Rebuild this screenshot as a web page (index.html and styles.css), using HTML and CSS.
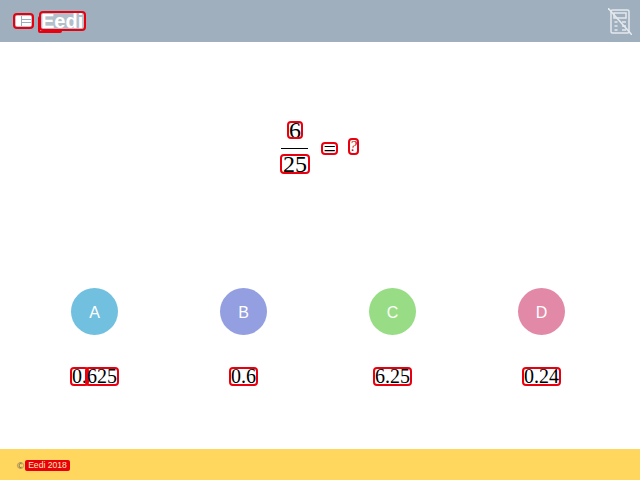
FILE: index.html
```html
<!DOCTYPE html>
<html lang="en">
<head>
  <meta charset="UTF-8">
  <title>Eedi</title>
  <link rel="stylesheet" href="styles.css">
</head>
<body>
  <header class="topbar">
    <div class="brand">
      <span class="mark logo-mark">
        <svg width="15" height="10" viewBox="0 0 15 10">
          <rect x="0" y="0" width="15" height="10" fill="#fff"/>
          <rect x="5" y="0" width="1" height="10" fill="#a0afbd"/>
          <rect x="6" y="3" width="9" height="1" fill="#a0afbd"/>
          <rect x="6" y="6" width="9" height="1" fill="#a0afbd"/>
        </svg>
      </span>
      <span class="mark logo-name">Eedi</span>
    </div>
    <svg class="calc" width="24" height="27" viewBox="0 0 24 27" fill="none" stroke="#e4e9ed" stroke-width="1.5">
      <rect x="3" y="2" width="18" height="23" rx="1.5"/>
      <rect x="6" y="5" width="12" height="5"/>
      <path d="M6.5 14h3M6.5 18h3M6.5 22h3M14 14h4M14 18h4M14 22h4"/>
      <path d="M0 0L24 27" stroke-width="1.5"/>
    </svg>
  </header>

  <main class="question">
    <div class="sum">
      <div class="fraction">
        <span class="mark numer">6</span>
        <span class="bar"></span>
        <span class="mark denom">25</span>
      </div>
      <span class="mark equals">=</span>
      <span class="mark unknown">?</span>
    </div>
  </main>

  <section class="answers">
    <div class="answer">
      <div class="letter letter-a">A</div>
      <div class="value"><span class="mark">0.</span><span class="mark">625</span></div>
    </div>
    <div class="answer">
      <div class="letter letter-b">B</div>
      <div class="value"><span class="mark">0.6</span></div>
    </div>
    <div class="answer">
      <div class="letter letter-c">C</div>
      <div class="value"><span class="mark">6.25</span></div>
    </div>
    <div class="answer">
      <div class="letter letter-d">D</div>
      <div class="value"><span class="mark">0.24</span></div>
    </div>
  </section>

  <footer class="footer">
    <span class="copy">©</span>
    <span class="mark footer-mark">Eedi 2018</span>
  </footer>
</body>
</html>
```

FILE: styles.css
```css
body { margin: 0; display: flex; flex-direction: column; height: 480px; overflow: hidden; background: #fff; color: #000; font-family: "Liberation Serif", serif; }

.mark { display: inline-block; outline: 2px solid #e8000f; border-radius: 2px; }

.topbar { height: 42px; flex: none; display: flex; align-items: center; justify-content: space-between; padding: 0 8px 0 15px; box-sizing: border-box; background: #a0afbd; }
.brand { position: relative; z-index: 0; display: flex; align-items: center; gap: 9px; }
.logo-mark { display: flex; align-items: center; justify-content: center; width: 17px; height: 12px; background: #b9c4ce; }
.logo-mark svg { display: block; }
.logo-name { position: relative; font: bold 20px/16px "Liberation Sans", sans-serif; color: #fff; width: 43px; background: #b3bfca; }
.logo-name::before { content: ""; position: absolute; z-index: -1; left: -3px; top: 3px; width: 24px; height: 17px; border: 2px solid #e8000f; border-radius: 2px; box-sizing: border-box; background: #b3bfca; }
.calc { display: block; }

.question { height: 246px; flex: none; display: flex; justify-content: center; box-sizing: border-box; padding: 81px 0 0; }
.sum { display: flex; align-items: center; height: 49px; margin-left: -2px; }
.fraction { display: flex; flex-direction: column; align-items: center; font-size: 24px; margin-right: 15px; }
.numer { height: 14px; line-height: 14px; }
.bar { width: 27px; height: 1px; margin: 11px 0 7px; background: #000; }
.denom { height: 16px; line-height: 16px; padding: 0 1px; }
.equals { font-size: 22px; line-height: 9px; margin: 2px 13.6px 0 0; }
.unknown { font-size: 15px; line-height: 13px; width: 7px; margin-bottom: 2px; color: #c00; font-style: italic; }

.answers { display: grid; grid-template-columns: repeat(4, 149px); padding-left: 20px; flex: none; }
.answer { display: flex; flex-direction: column; align-items: center; }
.letter { width: 47px; height: 47px; padding-top: 2px; box-sizing: border-box; border-radius: 50%; display: flex; align-items: center; justify-content: center; color: #fff; font: 16px "Liberation Sans", sans-serif; }
.letter-a { background: #72c0e0; }
.letter-b { background: #939fe0; }
.letter-c { background: #98dd85; }
.letter-d { background: #e289a8; }
.value { margin-top: 34px; font-size: 20px; line-height: 15px; }

.footer { margin-top: auto; height: 31px; flex: none; display: flex; align-items: center; gap: 1px; padding: 1px 0 0 17px; box-sizing: border-box; background: #ffd65e; font: 9px "Liberation Sans", sans-serif; color: #666; }
.copy { font-size: 9.5px; color: #555; }
.footer-mark { background: #e8000f; color: #ffe9a8; width: 45px; height: 11px; line-height: 11px; text-align: center; outline: 0; font-size: 8.6px; white-space: nowrap; }
```
